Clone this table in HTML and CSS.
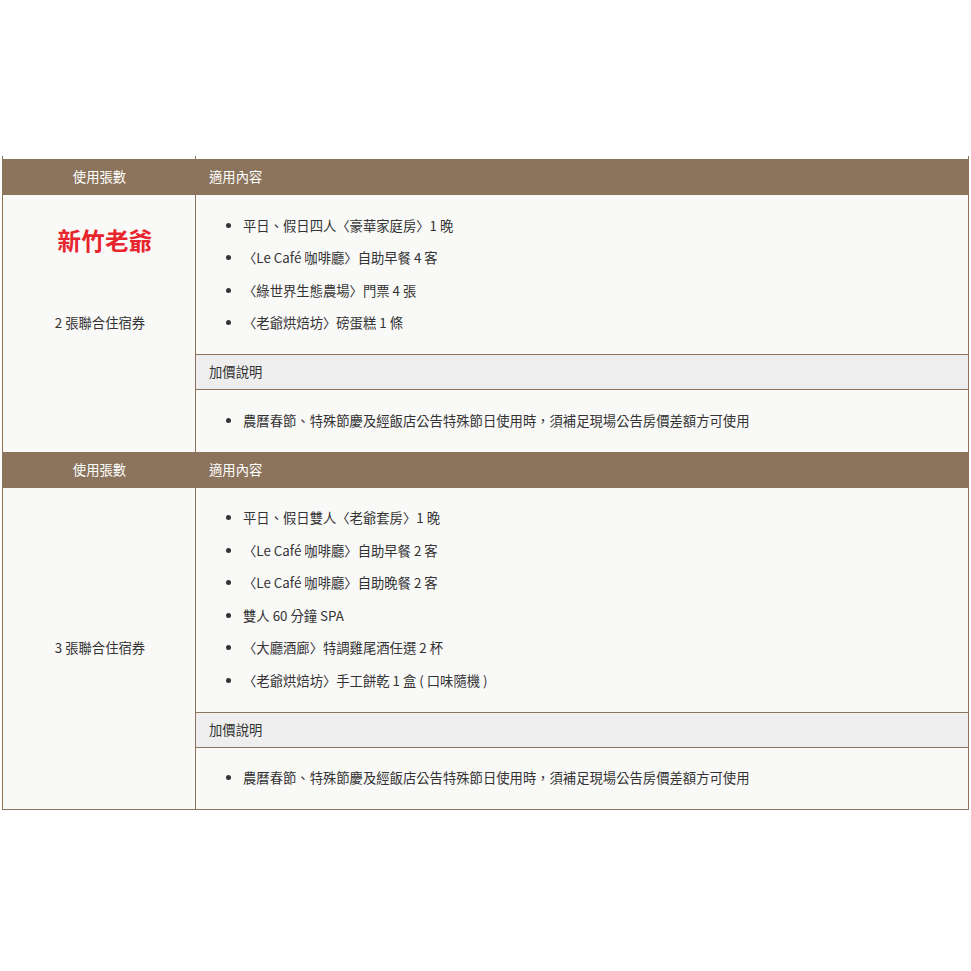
FILE: index.html
```html
<!DOCTYPE html>
<html lang="zh-Hant">
<head>
<meta charset="utf-8">
<title>新竹老爺 聯合住宿券</title>
<link rel="stylesheet" href="styles.css">
</head>
<body>
<div class="page">
  <div class="table">
    <div class="cap"><div class="cap-left"></div><div class="cap-right"></div></div>

    <section class="block">
      <div class="th th-left">使用張數</div>
      <div class="th th-right">適用內容</div>
      <div class="left">
        <div class="logo">新竹老爺</div>
        <div class="count">2 張聯合住宿券</div>
      </div>
      <div class="items">
        <ul>
          <li>平日、假日四人〈豪華家庭房〉1 晚</li>
          <li>〈Le Café 咖啡廳〉自助早餐 4 客</li>
          <li>〈綠世界生態農場〉門票 4 張</li>
          <li>〈老爺烘焙坊〉磅蛋糕 1 條</li>
        </ul>
      </div>
      <div class="sub">加價說明</div>
      <div class="items note">
        <ul>
          <li>農曆春節、特殊節慶及經飯店公告特殊節日使用時，須補足現場公告房價差額方可使用</li>
        </ul>
      </div>
    </section>

    <section class="block">
      <div class="th th-left">使用張數</div>
      <div class="th th-right">適用內容</div>
      <div class="left">
        <div class="count">3 張聯合住宿券</div>
      </div>
      <div class="items">
        <ul>
          <li>平日、假日雙人〈老爺套房〉1 晚</li>
          <li>〈Le Café 咖啡廳〉自助早餐 2 客</li>
          <li>〈Le Café 咖啡廳〉自助晚餐 2 客</li>
          <li>雙人 60 分鐘 SPA</li>
          <li>〈大廳酒廊〉特調雞尾酒任選 2 杯</li>
          <li>〈老爺烘焙坊〉手工餅乾 1 盒 ( 口味隨機 )</li>
        </ul>
      </div>
      <div class="sub">加價說明</div>
      <div class="items note">
        <ul>
          <li>農曆春節、特殊節慶及經飯店公告特殊節日使用時，須補足現場公告房價差額方可使用</li>
        </ul>
      </div>
    </section>
  </div>
</div>
</body>
</html>
```
FILE: styles.css
```css
html, body {
  margin: 0;
  padding: 0;
  background: #ffffff;
}

body {
  font-family: "Noto Sans CJK TC", "Noto Sans", sans-serif;
  font-size: 13.33px;
  color: #333333;
}

.page {
  padding-top: 156px;
  padding-left: 2px;
}

.table {
  width: 965px;
  border-left: 1px solid #8b745b;
  border-right: 1px solid #8b745b;
  border-bottom: 1px solid #8b745b;
}

.cap {
  display: grid;
  grid-template-columns: 193px 1fr;
  height: 3px;
}

.cap-left {
  border-right: 1px solid #8b745b;
}

.block {
  display: grid;
  grid-template-columns: 193px 1fr;
  grid-template-rows: 36px auto auto auto;
  background: #f9f9f8;
}

.th {
  background: #8b745b;
  color: #ffffff;
  line-height: 36px;
  height: 36px;
}

.th-left {
  text-align: center;
}

.th-right {
  padding-left: 13px;
}

.left {
  grid-column: 1;
  grid-row: 2 / 5;
  border-right: 1px solid #8b745b;
  display: grid;
  grid-template-rows: minmax(0, 1fr) auto minmax(0, 1fr);
  text-align: center;
}

.logo {
  grid-row: 1;
  align-self: start;
  margin-top: 33px;
  padding-left: 12px;
  font-size: 23.5px;
  line-height: 24px;
  font-weight: 700;
  color: #e8242d;
  letter-spacing: 0.2px;
}

.count {
  grid-row: 2;
  line-height: 20px;
  padding-left: 2px;
}

.items {
  grid-column: 2;
}

.items ul {
  margin: 0;
  padding: 14.5px 0 14.5px 47px;
}

.items li {
  line-height: 32.5px;
}

.sub {
  grid-column: 2;
  background: #eeeeee;
  border-top: 1px solid #8b745b;
  border-bottom: 1px solid #8b745b;
  height: 34px;
  line-height: 34px;
  padding-left: 13px;
}
```
